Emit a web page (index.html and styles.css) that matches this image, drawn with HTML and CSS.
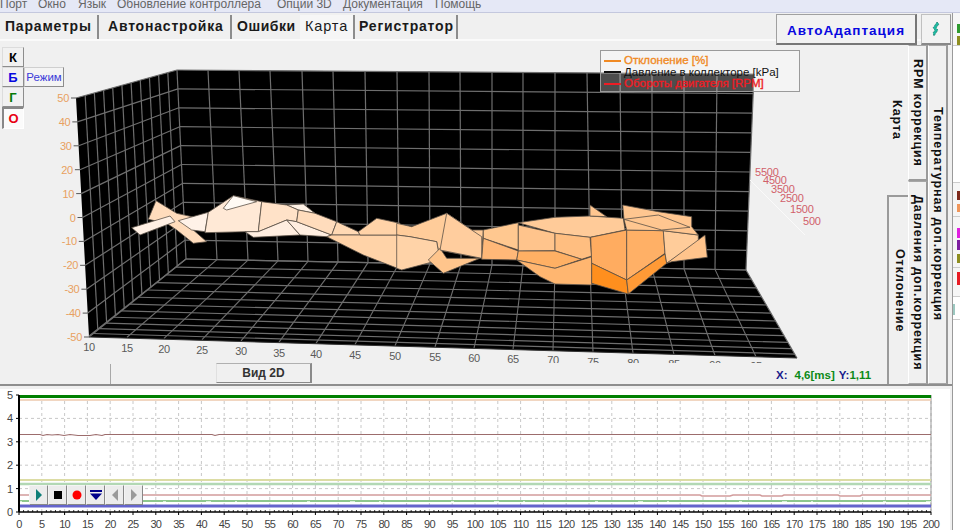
FILE: index.html
```html
<!DOCTYPE html>
<html lang="ru">
<head>
<meta charset="utf-8">
<title>АвтоАдаптация</title>
<link rel="stylesheet" href="styles.css">
</head>
<body>
<nav class="menubar">
  <span class="m1">Порт</span><span class="m2">Окно</span><span class="m3">Язык</span><span class="m4">Обновление контроллера</span><span class="m5">Опции 3D</span><span class="m6">Документация</span><span class="m7">Помощь</span>
</nav>
<div class="shell">
  <div class="main">
    <header class="toolbar">
      <div class="tab t-par">Параметры</div>
      <div class="tab t-auto">Автонастройка</div>
      <div class="tab t-err">Ошибки</div>
      <div class="tab t-map">Карта</div>
      <div class="tab t-reg">Регистратор</div>
      <button class="auto">АвтоАдаптация</button>
      <button class="tool"><svg width="10" height="16" viewBox="0 0 10 16"><path d="M6 1 L8 3 L5 7 L7 9 L3 15 L2 12 L4 9 L2 7 Z" fill="#1fb9a0" stroke="#0d6a60" stroke-width=".6" stroke-dasharray="2 1"/></svg></button>
    </header>
    <section class="workspace">
      <div class="view">
        <svg id="plot" class="plot" width="887" height="318" viewBox="0 45 887 318"></svg>
        <div class="modes">
          <button class="mode c-k">К</button>
          <button class="mode c-b">Б</button>
          <button class="mode c-g">Г</button>
          <button class="mode c-o">О</button>
        </div>
        <button class="regime">Режим</button>
        <div class="legend">
          <div class="row orange"><i></i>Отклонение [%]</div>
          <div class="row black"><i></i>Давление в коллекторе [kPa]</div>
          <div class="row red"><i></i>Обороты двигателя [RPM]</div>
        </div>
        <footer class="status">
          <button class="v2d">Вид 2D</button>
          <div class="coords"><b class="navy">X:</b><b class="green gx">4,6[ms]</b><b class="navy">Y:</b><b class="green">1,11</b></div>
        </footer>
      </div>
      <div class="side">
        <div class="col col1">
          <div class="vtab flat h-map"><span>Карта</span></div>
          <div class="vtab active h-dev"><span>Отклонение</span></div>
        </div>
        <div class="col col2">
          <div class="vtab h-rpm"><span>RPM коррекция</span></div>
          <div class="vtab h-press"><span>Давления доп.коррекция</span></div>
        </div>
        <div class="col col3">
          <div class="vtab h-temp"><span>Температурная доп.коррекция</span></div>
        </div>
      </div>
    </section>
    <section class="scope">
      <svg id="scope" width="950" height="142" viewBox="0 388 950 142"></svg>
      <div class="player">
        <button><svg width="10" height="14" viewBox="0 0 10 14"><path d="M2 1 L8 7 L2 13 Z" fill="#0f7f78"/></svg></button>
        <button><svg width="10" height="10" viewBox="0 0 10 10"><rect x="1" y="1" width="8" height="8" fill="#000"/></svg></button>
        <button><svg width="12" height="12" viewBox="0 0 12 12"><circle cx="6" cy="6" r="4.5" fill="#f00"/></svg></button>
        <button><svg width="14" height="12" viewBox="0 0 14 12"><rect x="1" y="1" width="12" height="2" fill="#00008b"/><path d="M1 4.5 H13 L7 11 Z" fill="#00008b"/></svg></button>
        <button><svg width="10" height="14" viewBox="0 0 10 14"><path d="M8 1 L2 7 L8 13 Z" fill="#9a9a9a"/></svg></button>
        <button><svg width="10" height="14" viewBox="0 0 10 14"><path d="M2 1 L8 7 L2 13 Z" fill="#9a9a9a"/></svg></button>
      </div>
    </section>
  </div>
  <aside class="strip">
    <div class="pane p1"><i class="sw green2"></i><i class="sw olive"></i></div>
    <div class="pane p2"></div>
    <div class="pane p3"><i class="sw brown"></i><i class="sw peach"></i></div>
    <div class="pane p4"><i class="sw magenta"></i><i class="sw purple"></i><i class="sw olive"></i></div>
    <div class="pane p5"><i class="sw redb"></i></div>
    <div class="pane p6"><i class="sw teal"></i></div>
    <div class="pane p7"></div>
  </aside>
</div>
<script src="app.js"></script>
</body>
</html>
```
FILE: styles.css
```css
* { box-sizing: border-box; }
html, body { margin: 0; height: 530px; overflow: hidden; }
body { width: 960px; background: #f0f0f0; font-family: "Liberation Sans", Arial, sans-serif; color: #111; }
button { font-family: inherit; padding: 0; margin: 0; }

.menubar { height: 13px; background: #e5e8f6; border-bottom: 1px solid #c4c8de; display: flex; overflow: hidden; font-size: 12px; line-height: 9px; color: #666; }
.menubar span { display: block; white-space: nowrap; }
.m1 { margin-left: 0; width: 38px; }
.m2 { width: 40px; }
.m3 { width: 39px; }
.m4 { width: 160px; }
.m5 { width: 66px; }
.m6 { width: 92px; }

.shell { display: flex; height: 517px; }
.main { width: 952px; display: flex; flex-direction: column; }

.toolbar { height: 32px; display: flex; align-items: flex-start; position: relative; background: linear-gradient(#f0f0f0 26px, #fafafa 26px, #fafafa 28px, #f0f0f0 28px); }
.tab { height: 24px; margin-top: 2px; font-size: 14px; font-weight: 700; letter-spacing: .8px; line-height: 23px; white-space: nowrap; border-right: 2px solid #8c8c8c; color: #1a1a1a; }
.t-par { width: 99px; padding-left: 5px; }
.t-auto { width: 133px; padding-left: 9px; }
.t-err { width: 68px; padding-left: 5px; border-right: 0; letter-spacing: .55px; }
.t-map { width: 55px; padding-left: 5px; font-weight: 400; font-size: 14.5px; letter-spacing: .85px; background: #f6f6f6; }
.t-reg { width: 103px; padding-left: 4px; }
.auto { margin-left: 318px; width: 141px; height: 31px; margin-top: 1px; background: #f2f2f2; border: 1px solid #a0a0a0; border-right: 2px solid #777; border-bottom: 2px solid #777; color: #0808e0; font-size: 13.5px; font-weight: 700; letter-spacing: 1px; padding-top: 2px; }
.tool { margin-left: 4px; width: 30px; height: 31px; margin-top: 1px; background: #f2f2f2; border: 1px solid #c0c0c0; border-right: 1px solid #999; border-bottom: 2px solid #888; display: flex; align-items: center; justify-content: center; }

.workspace { height: 341px; display: flex; border-bottom: 2px solid #8e8e8e; }
.view { width: 887px; position: relative; display: flex; flex-direction: column; }
.plot { display: block; flex: none; font-family: "Liberation Sans", Arial, sans-serif; }
.modes { position: absolute; left: 2px; top: 2px; display: flex; flex-direction: column; }
.mode { width: 22px; height: 20px; font-size: 13px; font-weight: 700; background: #f1f1f1; border: 1px solid #dcdcdc; border-right: 1px solid #8d8d8d; border-bottom: 1px solid #8d8d8d; line-height: 1; }
.c-k { color: #000; }
.c-b { color: #0808e0; }
.c-g { color: #067a06; }
.c-o { color: #e80014; background: #fbfbfb; height: 22px; border: 1px solid #fff; border-left: 2px solid #888; border-top: 2px solid #888; }
.regime { position: absolute; left: 24px; top: 22px; width: 40px; height: 20px; font-size: 11.5px; color: #3b3bd8; background: #f4f4f4; border: 1px solid #cfcfcf; border-right: 1px solid #8d8d8d; border-bottom: 1px solid #8d8d8d; }

.legend { position: absolute; left: 600px; top: 5px; width: 200px; height: 42px; padding: 4px 0 0 3px; background: rgba(255,255,255,.3); border: 1px solid #9a9a9a; font-size: 11.5px; line-height: 11.5px; white-space: nowrap; }
.row { display: flex; align-items: center; height: 11.5px; }
.row i { width: 17px; height: 2px; margin-right: 3px; flex: none; }
.orange { color: #f08a24; -webkit-text-stroke: .35px #f08a24; }
.orange i { background: #f08a24; }
.black { color: #111; }
.black i { background: #111; }
.red { color: #ee1c24; -webkit-text-stroke: .35px #ee1c24; }
.red i { background: #ee1c24; }

.status { flex: 1; position: relative; display: flex; align-items: flex-end; padding-left: 110px; }
.v2d { width: 96px; height: 20px; margin-left: 106px; margin-bottom: 1px; position: relative; background: #f0f0f0; border: 1px solid #e0e0e0; border-right: 2px solid #8a8a8a; border-top: 1px solid #b0b0b0; border-bottom: 1px solid #8a8a8a; font-size: 12px; font-weight: 700; color: #333; }
.status::before { content: ""; position: absolute; left: 110px; top: 1px; bottom: 0; width: 1px; background: #a8a8a8; }
.coords { margin-left: 464px; margin-bottom: 3px; display: flex; font-size: 11.5px; white-space: nowrap; }
.navy { color: #1a1a8c; }
.green { color: #0c8a18; }
.gx { margin-left: 7px; margin-right: 4px; }

.side { width: 65px; display: flex; }
.col { display: flex; flex-direction: column; width: 20px; }
.col1 { width: 21px; }
.vtab { display: flex; align-items: center; justify-content: center; background: #f0f0f0; border: 1px solid #a6a6a6; border-left: 1px solid #fff; border-right: 2px solid #9a9a9a; }
.vtab span { writing-mode: vertical-rl; font-size: 12.5px; font-weight: 700; letter-spacing: .9px; white-space: nowrap; color: #111; }
.flat { border-color: transparent; }
.active { border: 0; border-left: 2px solid #9a9a9a; border-top: 2px solid #9a9a9a; padding-left: 2px; }
.h-map { height: 150px; }
.h-dev { height: 189px; }
.h-rpm { height: 136px; border-bottom: 2px solid #9a9a9a; }
.h-press { height: 203px; }
.h-temp { height: 339px; }
.col3 .vtab { border-right: 2px solid #9a9a9a; }

.scope { position: relative; flex: 1; background: #fff; border-top: 3px solid #f0f0f0; margin-right: 2px; }
#scope { display: block; margin-top: -1px; font-family: "Liberation Sans", Arial, sans-serif; }
.player { position: absolute; left: 29px; top: 96px; display: flex; background: #eee; }
.player button { width: 19px; height: 20px; background: #ececec; border: 1px solid #f4f4f4; border-right: 1px solid #888; border-bottom: 1px solid #888; display: flex; align-items: center; justify-content: center; }

.strip { width: 8px; display: flex; flex-direction: column; background: #f0f0f0; border-left: 1px solid #9a9a9a; overflow: hidden; }
.pane { border-bottom: 1px solid #ccc; background: #f6f6f6; display: flex; flex-direction: column; align-items: flex-end; }
.sw { display: block; width: 3px; }
.p1 { height: 33px; padding-top: 11px; }
.p1 .green2 { height: 9px; background: #2f9b2f; margin-bottom: 3px; }
.p1 .olive { height: 9px; }
.p2 { height: 137px; background: #fff; }
.p3 { height: 34px; padding-top: 8px; }
.brown { height: 9px; background: #7e2a1c; margin-bottom: 4px; }
.peach { height: 8px; background: #f0965a; }
.p4 { height: 51px; padding-top: 11px; }
.magenta { height: 10px; background: #e020e0; margin-bottom: 2px; }
.purple { height: 10px; background: #7d1fa0; margin-bottom: 4px; }
.olive { height: 9px; background: #8e8e20; }
.p5 { height: 29px; padding-top: 4px; }
.redb { height: 13px; background: #e81c24; }
.p6 { height: 23px; padding-top: 7px; align-items: flex-start; background: #fff; }
.teal { height: 11px; width: 2px; background: #9cc8c0; }
.p7 { flex: 1; background: #fff; border-bottom: 0; }
```
FILE: app.js
```js
var NS = "http://www.w3.org/2000/svg";
function el(parent, name, attrs, text) {
  var n = document.createElementNS(NS, name);
  for (var k in attrs) n.setAttribute(k, attrs[k]);
  if (text !== undefined) n.textContent = text;
  parent.appendChild(n);
  return n;
}
function line(p, x1, y1, x2, y2, c, w, extra) {
  var a = { x1: x1, y1: y1, x2: x2, y2: y2, stroke: c, "stroke-width": w };
  if (extra) for (var k in extra) a[k] = extra[k];
  return el(p, "line", a);
}
function lerp(a, b, t) { return a + (b - a) * t; }

/* ---------- 3D map ---------- */
var plot = document.getElementById("plot");
var GRID = "#6e6e6e";
var box = {
  lt: [76, 98], lb: [89, 337], bt: [177, 70], bb: [186, 259],
  rt: [754, 74], rb: [746, 270], fr: [797, 358]
};
function pts(list) { return list.map(function (p) { return p.join(","); }).join(" "); }
el(plot, "polygon", { points: pts([box.lt, box.bt, box.rt, box.rb, box.fr, box.lb]), fill: "#000" });

var backTop = [177, 208, 239, 270, 302, 333, 365, 397, 429, 460, 492, 523, 555, 587, 620, 652, 684, 717, 754];
var backBot = [186, 217, 248, 278, 308, 338, 368, 399, 430, 461, 492, 523, 555, 590, 622, 652, 684, 715, 746];
var front = [89, 127, 164, 202, 241, 279, 316, 355, 395, 435, 474, 513, 553, 593, 633, 674, 715, 756, 797];
var WALL = 11, DEPTH = 12;

/* back wall */
for (var i = 0; i <= 10; i++) {
  var t = i / 10;
  line(plot, lerp(box.bt[0], box.bb[0], t), lerp(box.bt[1], box.bb[1], t),
       lerp(box.rt[0], box.rb[0], t), lerp(box.rt[1], box.rb[1], t), GRID, 1.2);
}
backTop.forEach(function (x, i) {
  var yt = lerp(70, 74, i / 18), yb = lerp(259, 270, i / 18);
  line(plot, x, yt, backBot[i], yb, GRID, 1.2);
});
/* left wall */
for (i = 0; i <= 10; i++) {
  t = i / 10;
  var lx = lerp(box.lt[0], box.lb[0], t), ly = lerp(box.lt[1], box.lb[1], t);
  line(plot, lx, ly, lerp(box.bt[0], box.bb[0], t), lerp(box.bt[1], box.bb[1], t), GRID, 1.2);
  line(plot, lx - 5, ly, lx, ly, "#555", 1);
  el(plot, "text", { x: lx - 7, y: ly + 4, "font-size": 11, fill: "#e8a060", "text-anchor": "end", "letter-spacing": "-.3" }, String(50 - i * 10));
}
for (i = 1; i < WALL; i++) {
  var d = i / WALL;
  line(plot, lerp(76, 177, d), lerp(98, 70, d), lerp(89, 186, d), lerp(337, 259, d), GRID, 1.2);
}
/* floor */
for (i = 1; i <= DEPTH; i++) {
  d = Math.pow(i / DEPTH, 1.25);
  line(plot, lerp(89, 186, d), lerp(337, 259, d), lerp(797, 746, d), lerp(358, 270, d), GRID, 1.2);
}
front.forEach(function (x, i) {
  line(plot, x, lerp(336, 358, i / 18), backBot[i], lerp(259, 270, i / 18), GRID, 1.1);
  var y = 351 + (x - 89) * 0.029;
  el(plot, "text", { x: x, y: y, "font-size": 11, fill: "#5a5a5a", "text-anchor": "middle", "letter-spacing": "-.3" }, String(10 + i * 5));
});
line(plot, 89, 337, 797, 358, "#333", 1);

/* surface: coordinates read at 3x from x0, 180 */
function shape(x0, list, fill) {
  var out = [];
  for (var k = 0; k < list.length; k += 2) out.push((x0 + list[k] / 3).toFixed(1) + "," + (180 + list[k + 1] / 3).toFixed(1));
  el(plot, "polygon", { points: out.join(" "), fill: fill, stroke: "#5c5248", "stroke-width": 0.8, "stroke-linejoin": "round" });
}
var A = 60, B = 400;
[
  [A, [265,118,288,62,350,100,440,120,400,150,440,185,400,190,350,150,320,130], "#ffdcbc"],
  [A, [215,143,240,165,345,125,330,108], "#fff0e4"],
  [A, [355,122,445,97,435,155,395,150], "#fff2e8"],
  [A, [445,97,520,47,605,65,595,155,555,155,435,158], "#ffe9d6"],
  [A, [520,47,590,65,500,90,490,85], "#fffaf4"],
  [A, [680,75,730,72,765,100,715,90], "#fff2e6"],
  [A, [605,65,680,75,715,90,710,125,680,120,595,155], "#ffe2c8"],
  [A, [680,120,720,165,580,172,555,155,595,155], "#ffeee0"],
  [A, [680,120,710,125,815,165,800,170,720,165], "#ffeee0"],
  [A, [715,90,765,100,830,125,815,165,710,125], "#ffdcbc"],
  [A, [830,125,895,155,900,165,815,165], "#ffd9b4"],
  [A, [800,170,815,165,900,165,1020,165,1020,268,910,225], "#ffd3a8"],
  [A, [895,155,950,115,1020,130,1020,165,900,165], "#ffd3a8"],
  [B, [-10,130,35,140,140,100,215,150,250,150,245,235,115,210,110,185,30,170,-10,165], "#ffcc9a"],
  [B, [-10,165,30,170,110,185,120,240,5,270,-10,265], "#ffd3a8"],
  [B, [85,240,120,205,140,235,240,235,130,280], "#ffc58c"],
  [B, [140,100,215,150,245,170,245,235,120,210], "#ffcd9e"],
  [B, [250,150,355,128,355,210,250,175], "#ffc890"],
  [B, [250,175,355,213,350,240,245,238], "#ffb878"],
  [B, [355,128,465,112,570,108,670,115,675,150,570,172,465,160], "#ffcb99"],
  [B, [355,135,465,160,465,212,355,213], "#ffc48c"],
  [B, [465,160,570,172,575,228,545,238,465,212], "#ffbe80"],
  [B, [355,213,465,213,545,238,465,265,350,240], "#ffb064"],
  [B, [350,240,465,265,575,230,575,315,465,312,420,290], "#ffb670"],
  [B, [572,172,680,150,680,300,575,250], "#ffac60"],
  [B, [680,150,790,152,795,220,680,300], "#ffb066"],
  [B, [575,250,680,300,685,342,575,310], "#ff8f1e"],
  [B, [680,300,795,222,800,250,685,342], "#ff9a36"],
  [B, [790,152,895,165,895,185,800,250,795,220], "#ffcc9a"],
  [B, [800,250,915,165,922,232,815,245], "#ffc48c"],
  [B, [570,75,620,110,570,108], "#ffc690"],
  [B, [668,75,775,95,875,110,875,140,895,165,790,152,680,150,672,118], "#ffc690"],
  [B, [672,118,775,105,870,142,785,150], "#ffc690"]
].forEach(function (s) { shape(s[0], s[1], s[2]); });

/* rpm labels */
line(plot, 750, 180, 805, 235, "#fafafa", 1);
[["5500",755,176],["4500",763,184],["3500",771,193],["2500",780,202],["1500",790,213],["500",803,225]].forEach(function (l) {
  el(plot, "text", { x: l[1], y: l[2], "font-size": 11, fill: "#d0606a", "letter-spacing": "-.2" }, l[0]);
});

/* ---------- scope ---------- */
var sc = document.getElementById("scope");
var L = 19, R = 931, T = 395, Z = 512;
function trace(list, c, w) {
  el(sc, "polyline", { points: list.join(" "), fill: "none", stroke: c, "stroke-width": w });
}
for (i = 1; i <= 40; i++) {
  var x = L + (R - L) * i / 40;
  line(sc, x, T, x, Z, "#c8c8c8", 1, { "stroke-dasharray": "3 3" });
}
for (i = 1; i <= 4; i++) {
  var y = Z - (Z - T) * i / 5;
  line(sc, L, y, R, y, "#c8c8c8", 1, { "stroke-dasharray": "3 3" });
}
for (i = 0; i <= 5; i++) {
  y = Z - (Z - T) * i / 5;
  el(sc, "text", { x: 13, y: i === 5 ? 399 : y + 4, "font-size": 11, fill: "#444", "text-anchor": "end" }, String(i));
  line(sc, L - 3, y, L, y, "#000", 1);
}
line(sc, R, T, R, Z, "#999", 1);
line(sc, L, 400, R, 400, "#ecc9ac", 1.6);
trace([19,434.5, 40,434.5, 43,435.5, 47,434.5, 52,435, 58,434.5, 64,435.5, 70,434.5, 78,435.5, 90,435.5, 96,434.5, 102,435.5, 105,434.5, 212,434.5, 215,435.5, 219,434.5, 931,434.5], "#9c6c6c", 1.2);
line(sc, L, 480, R, 480, "#dcdca4", 2);
line(sc, L, 484, R, 484, "#b2d8b4", 2.4);
trace([19,495, 700,495, 702,496, 730,496, 733,495, 760,495, 762,496, 782,496, 784,495, 838,495, 840,496, 860,496, 862,495, 931,495], "#d29c9c", 1.6);
line(sc, L, 501, R, 501, "#1f8f1f", 1.2);
line(sc, L, 501.5, R, 501.5, "#d8f0d8", 1.2, { "stroke-dasharray": "3 40 5 24 2 70" });
line(sc, L, 506, R, 506, "#6464cc", 3);
line(sc, L, 396.5, R, 396.5, "#008000", 3);
line(sc, L, T, L, Z, "#000", 2);
line(sc, L, Z, R, Z, "#000", 1.5);
for (i = 0; i <= 200; i++) {
  x = L + (R - L) * i / 200;
  if (i % 5 === 0) {
    el(sc, "text", { x: x, y: 528, "font-size": 11, fill: "#444", "text-anchor": "middle", "letter-spacing": "-.7" }, String(i));
    line(sc, x, Z, x, Z + 3, "#000", 1);
  } else {
    line(sc, x, Z - 2, x, Z, "#000", 0.8);
  }
}
```
